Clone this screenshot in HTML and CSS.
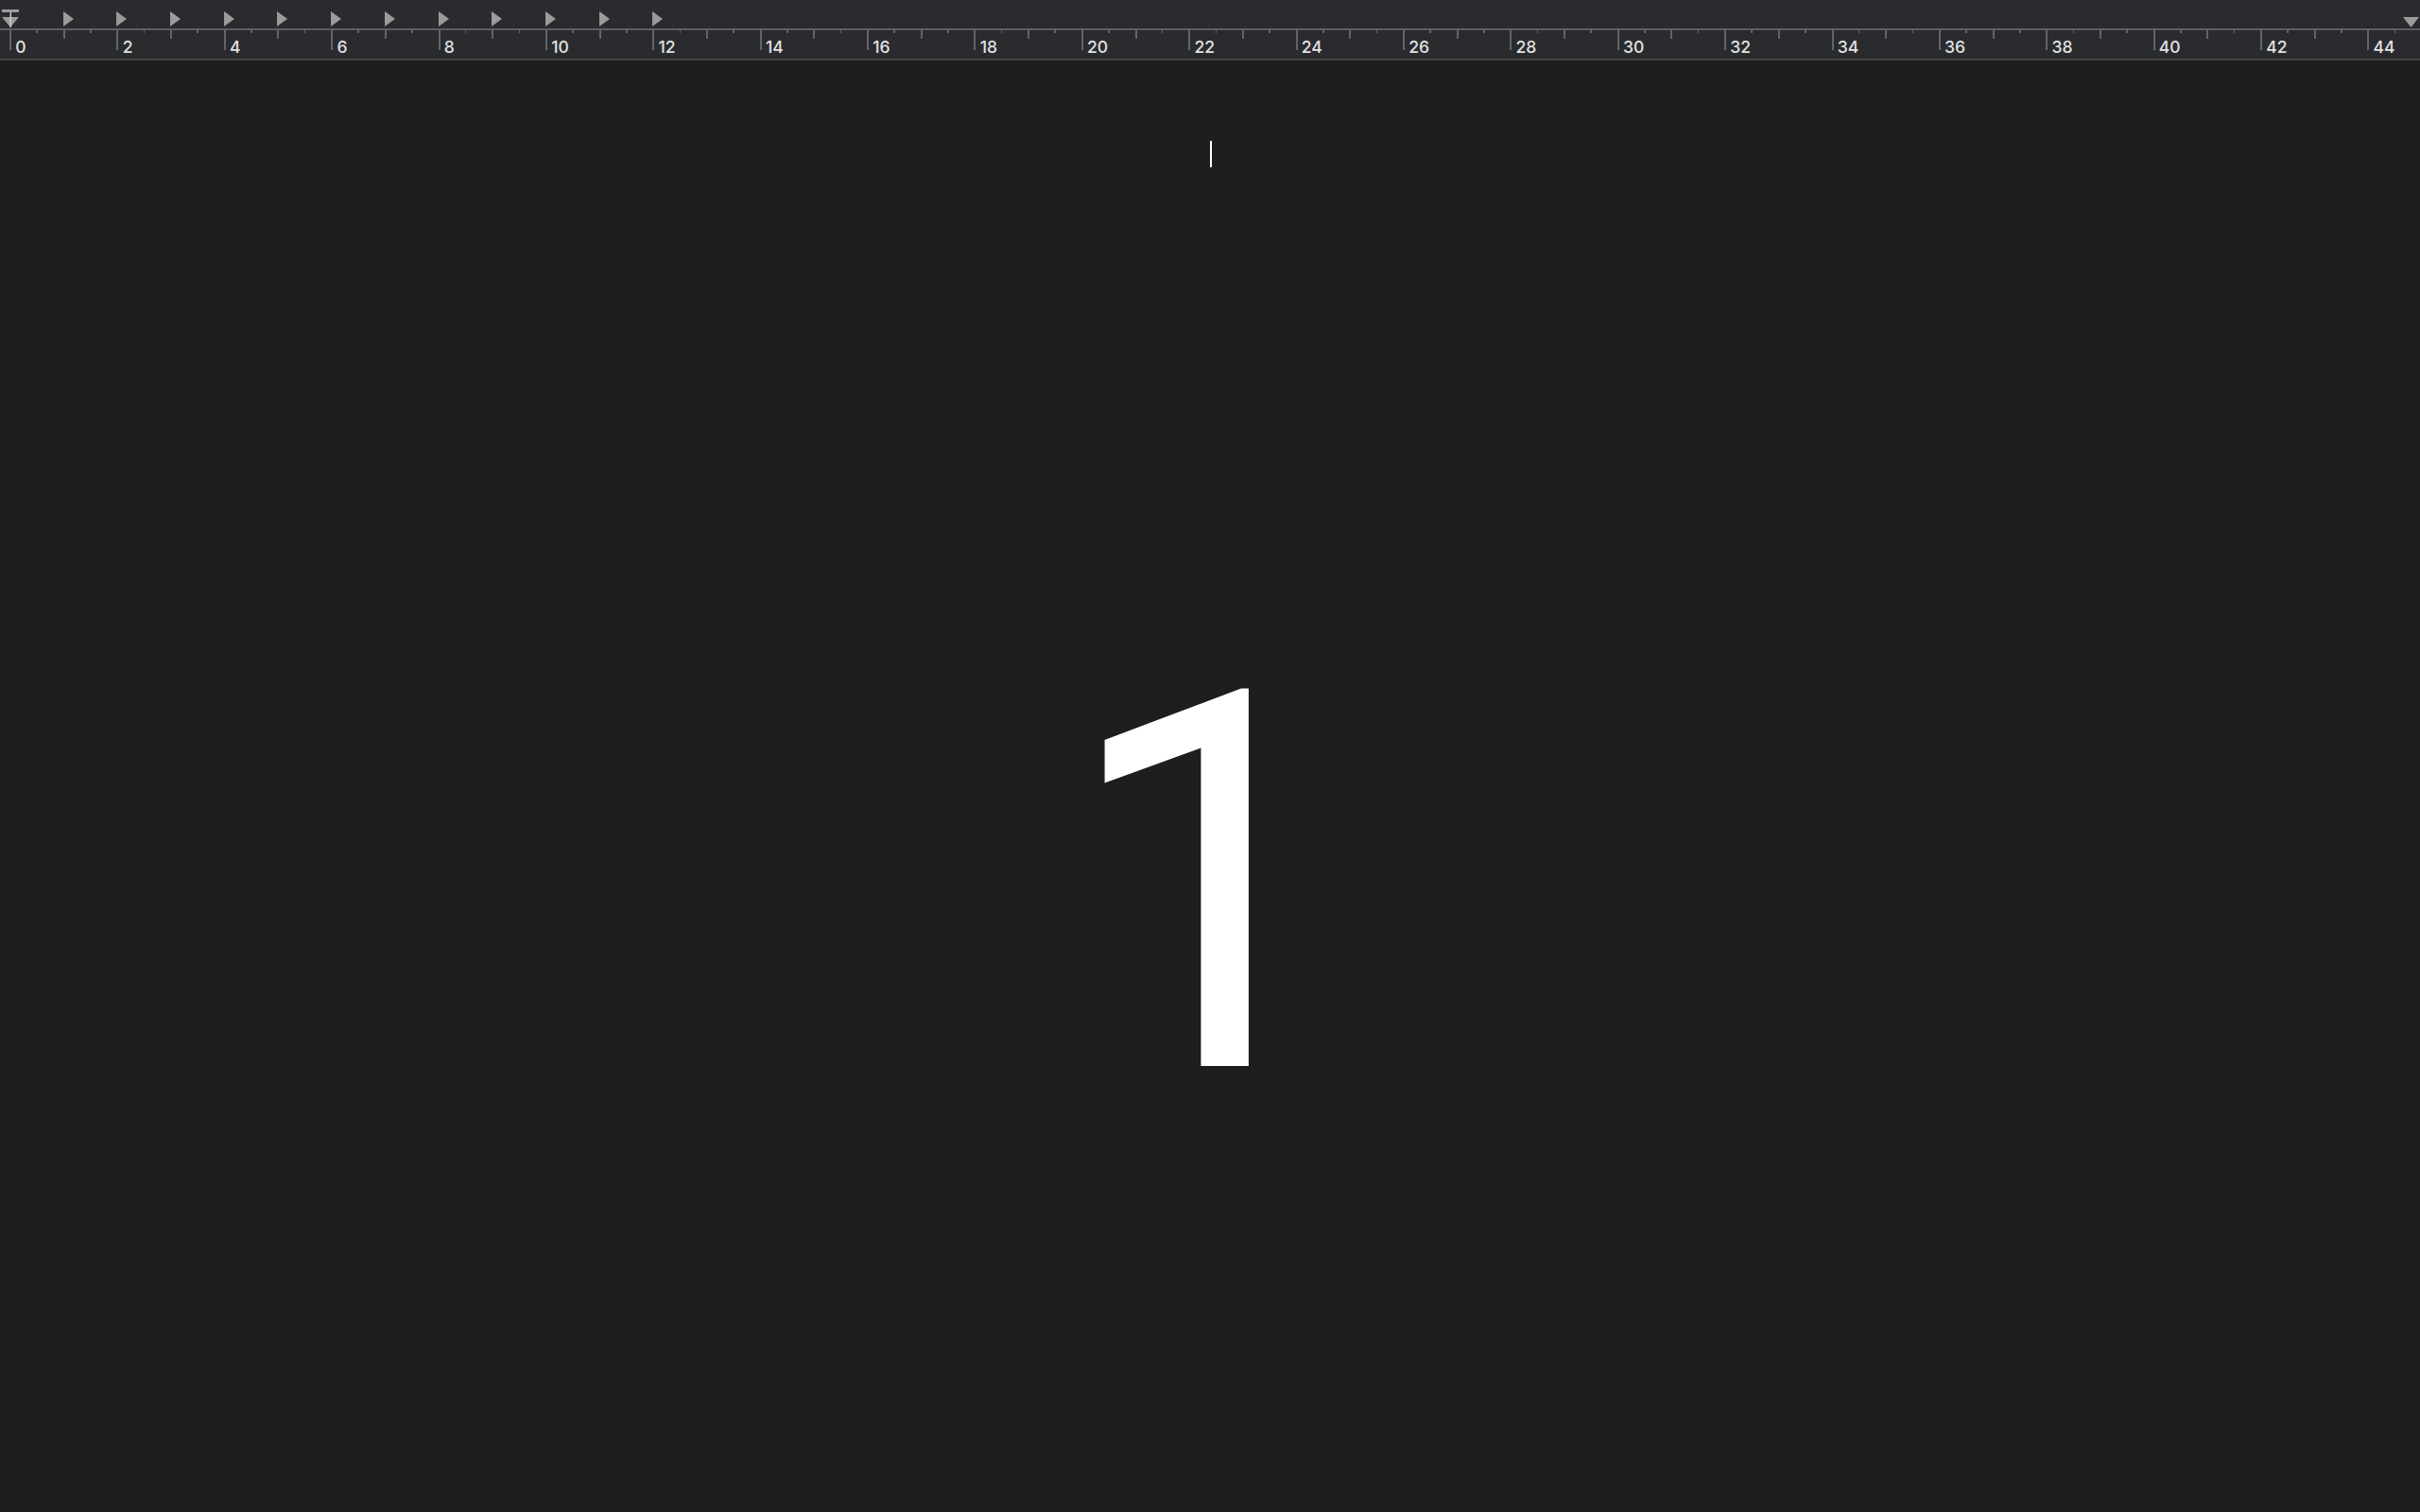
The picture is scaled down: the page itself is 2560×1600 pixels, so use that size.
FILE: index.html
```html
<!DOCTYPE html>
<html lang="en">
<head>
<meta charset="utf-8">
<title>Document</title>
<link rel="stylesheet" href="styles.css">
</head>
<body>
<div class="ruler">
  <div class="ticks"></div>
  <div class="stops">
    <svg class="indent" width="22" height="32" viewBox="0 0 22 32"><rect x="2" y="10" width="18" height="3" fill="#9b9b9b"/><polygon points="2,18 20,18 11,29" fill="#9b9b9b"/><rect x="10.5" y="13" width="1.5" height="16" fill="#c9c9c9"/></svg>
    <div class="tabs">
      <span class="tab"></span><span class="tab"></span><span class="tab"></span><span class="tab"></span>
      <span class="tab"></span><span class="tab"></span><span class="tab"></span><span class="tab"></span>
      <span class="tab"></span><span class="tab"></span><span class="tab"></span><span class="tab"></span>
    </div>
    <svg class="right-margin" width="17" height="32" viewBox="0 0 17 32"><polygon points="0,18 17,18 8.5,29" fill="#9b9b9b"/></svg>
  </div>
  <div class="labels">
    <span>0</span><span>2</span><span>4</span><span>6</span><span>8</span><span>10</span>
    <span>12</span><span>14</span><span>16</span><span>18</span><span>20</span><span>22</span>
    <span>24</span><span>26</span><span>28</span><span>30</span><span>32</span><span>34</span>
    <span>36</span><span>38</span><span>40</span><span>42</span><span>44</span>
  </div>
</div>
<main class="page">
  <p class="line"><span class="caret"></span></p>
  <p class="big">1</p>
</main>
</body>
</html>
```
FILE: styles.css
```css
html, body {
  margin: 0;
  padding: 0;
  background: #1e1e1e;
  height: 100%;
  overflow: hidden;
}
body {
  font-family: Roboto, "Liberation Sans", Arial, sans-serif;
}
.ruler {
  position: relative;
  height: 62px;
  background:
    linear-gradient(#5e5e62, #5e5e62) 0 30px / 100% 2px no-repeat,
    #2a2b2f;
  border-bottom: 2px solid #45464a;
}
.ticks {
  position: absolute;
  left: 10.3px;
  right: 0;
  top: 31px;
  height: 22px;
  background:
    repeating-linear-gradient(to right, #646468 0 2px, transparent 2px 113.386px) 0 0 / 100% 22px no-repeat,
    repeating-linear-gradient(to right, #646468 0 2px, transparent 2px 56.693px) 0 0 / 100% 10px no-repeat,
    repeating-linear-gradient(to right, #646468 0 1.6px, transparent 1.6px 28.346px) 0 0 / 100% 4px no-repeat;
}
.stops {
  position: absolute;
  inset: 0 0 auto 0;
  height: 32px;
  display: flex;
}
.indent {
  flex: none;
}
.tabs {
  display: flex;
  padding-left: 44.7px;
  padding-top: 12px;
}
.tab {
  flex: none;
  width: 56.693px;
  height: 17px;
}
.tab::before {
  content: "";
  display: block;
  width: 0;
  height: 0;
  border-top: 8.5px solid transparent;
  border-bottom: 8.5px solid transparent;
  border-left: 11px solid #9b9b9b;
}
.right-margin {
  margin-left: auto;
  margin-right: 1px;
}
.labels {
  position: absolute;
  left: 11.3px;
  top: 40px;
  display: flex;
  font-family: Inter, Roboto, sans-serif;
  font-size: 17.5px;
  font-weight: 500;
  line-height: 20px;
  color: #e2e2e2;
  white-space: nowrap;
}
.labels span {
  flex: none;
  width: 113.386px;
  padding-left: 5px;
  box-sizing: border-box;
}
.page {
  text-align: center;
  color: #ffffff;
}
.line {
  margin: 0;
  padding-top: 85px;
  height: 28px;
  line-height: 28px;
}
.caret {
  display: inline-block;
  width: 2px;
  height: 28px;
  background: #ffffff;
  vertical-align: top;
  margin-left: 2px;
}
.big {
  margin: 480px 0 0;
  font-family: Roboto, sans-serif;
  font-size: 559px;
  line-height: 559px;
  height: 559px;
  padding-right: 2px;
}
```
